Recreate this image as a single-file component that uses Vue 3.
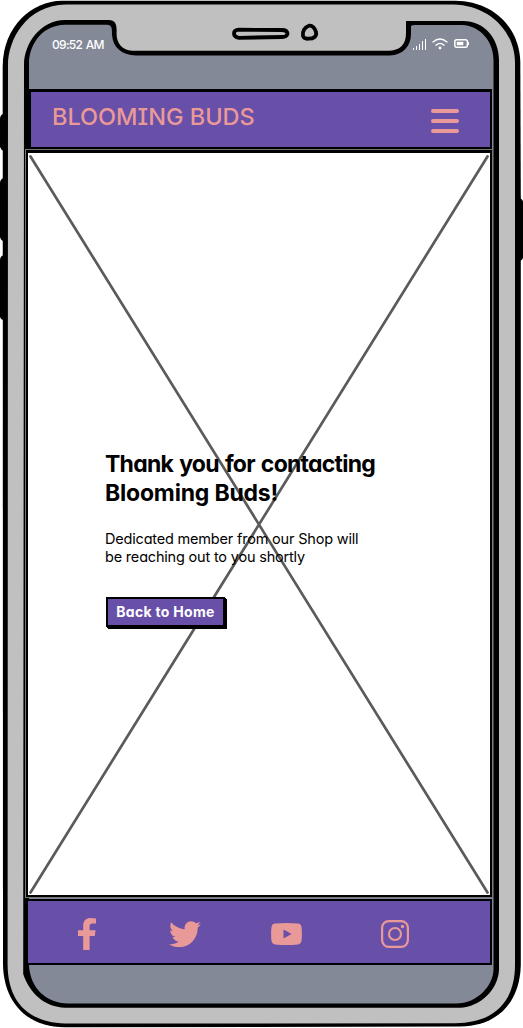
<script setup>
const barHeights = [2, 4, 6, 9, 11]
</script>

<template>
  <div class="phone">
    <svg class="frame" viewBox="0 0 523 1028" aria-hidden="true">
      <path d="M3 114Q0 115 0 119V147Q1 150 4 151ZM4 178Q0 179 0 183V237Q1 241 4 241ZM4 255Q0 256 0 260V317Q1 320 4 320ZM519 198Q523 199 523 202V258Q522 261 518 261Z" />
      <path d="M2.7 66C3 26 32 1 62 .7H455C494 1 519.5 28 520.3 62L520.8 200V965C520 1001 499 1026 460 1026.5L65 1027.3C26 1027 4 1002 3 965Z" />
      <path class="metal" d="M8 65C8 40 26 5 66 4.4H453C489 5 515 31 515 63V965C515 1001 495 1023 455 1023.2L65 1023.6C26 1022 8 1000 7.6 965Z" />
      <path d="M24 65C24 43 41 20 65 20H109C115 20 117 24 116.6 32C116 43 122 50 132 50.8H388C400 50.5 406 45 406 33V21H463C484 21 499 38 499 60V970C498 990 480 1007 460 1007.7H65C45 1007 30 994 23.2 974Z" />
      <path class="glass" d="M29 62C30 43 43 25 65 24.8H107C112 25 112 28 112 35C113 47 121 55 136 55.5H390C403 55 411 46 411 34V26Q412 25 415 25H462C481 26 493.5 42 493.5 60V970C493 985 478 1003.5 456 1003.5H68C46 1003 30 988 29 965Z" />
      <path class="ink" d="M239 29.7L282 30Q287 30 287.5 33.5Q287 37 282 37L239 37.8Q234 37 234 33.5Q234 30 239 29.7Z" />
      <path class="ink" d="M309 25.7C305 27 302 31 303 36Q304 39 308 38.7C314 39 317 36 316 32C315 28 312 25 309 25.7Z" />
    </svg>

    <div class="screen">
      <div class="status">
        <span class="time">09:52 AM</span>
        <div class="indicators">
          <div class="signal"><i v-for="(h, n) in barHeights" :key="n" :style="{ height: h + 'px' }"></i></div>
          <svg class="wifi" width="16" height="12" viewBox="0 0 16 12">
            <path d="M1 4Q8-2 15 4M4 7.2Q8 3.5 12 7.2" /><circle cx="8" cy="10" r="1.4" />
          </svg>
          <svg class="battery" width="15" height="9" viewBox="0 0 15 9">
            <rect class="shell" x=".8" y=".8" width="12.6" height="7.4" rx="2" />
            <rect x="2.800" y="2.800" width="6.500" height="3.400" /><rect x="13.500" y="3" width="1.500" height="3" />
          </svg>
        </div>
      </div>

      <header class="header">
        <h1>BLOOMING BUDS</h1>
        <div class="menu"><i></i><i></i><i></i></div>
      </header>

      <main class="main">
        <svg class="cross" viewBox="0 0 467 750" aria-hidden="true">
          <path d="M5.5 6.5L462.5 742.5M462.5 6.5L5.5 742.5" />
        </svg>
        <h2><span class="lead">Thank you for contacting</span><br>Blooming Buds!</h2>
        <p>Dedicated member from our Shop will<br>be reaching out to you shortly</p>
        <button>Back to Home</button>
      </main>

      <footer class="footer">
        <svg class="facebook" width="18" height="32" viewBox="0 0 18 32"><path d="M5.2 32V18H0V12.2H5.2V8C5.2 2.6 8.1 0 13 0Q16 0 18 .4V5.5H15C12 5.5 11.6 7 11.6 9V12.2H17.6L16.7 18H11.6V32Z" /></svg>
        <svg class="twitter" width="32" height="26" viewBox="0 0 512 416"><path d="M459 107c.3 4.500.3 9 .3 14C459 260 354 420 161 420 102 420 47 403 0 373c8 1 16 1.300 25 1.300 49 0 94-17 130-45-46-1-85-31-98-73 6 1 13 1.600 20 1.600 9 0 19-1.300 28-3.600C57 244 21 202 21 151v-1.300c14 8 30 13 47 13.600C40 144 21 111 21 75c0-20 5-38 14-54 52 64 130 105 217 110-2-8-3-16-3-24C249 49 296 2 354 2c30 0 57 13 76 33 24-5 47-13 67-25-8 25-25 45-46 58 21-2 42-8 61-16-15 21-33 40-53 55z" /></svg>
        <svg class="youtube" width="31" height="22" viewBox="0 0 31 22"><path fill-rule="evenodd" d="M4 .6Q15.500-.5 27 .6Q30 1 30.500 4Q31.300 11 30.500 18Q30 21 27 21.400Q15.500 22.500 4 21.400Q1 21 .5 18Q-.3 11 .5 4Q1 1 4 .6ZM12.500 6.500V15.500L20.500 11Z" /></svg>
        <svg class="insta" width="28" height="28" viewBox="0 0 28 28"><rect x="1.100" y="1.100" width="25.800" height="25.800" rx="6.800" /><circle cx="14" cy="14" r="6" /><circle class="dot" cx="21.500" cy="6.500" r="1.700" /></svg>
      </footer>
    </div>
  </div>
</template>

<style>
body { margin: 0; background: #fff; }
</style>

<style scoped>
* { box-sizing: border-box; }
.phone {
  position: relative;
  width: 523px;
  height: 1028px;
  overflow: hidden;
  font-family: Inter, "Liberation Sans", sans-serif;
  font-feature-settings: "cv11" 1, "cv08" 1;
}
.frame { position: absolute; inset: 0; width: 523px; height: 1028px; }
.metal { fill: #c0c0c0; }
.glass { fill: #838997; }
.ink { fill: none; stroke: #000; stroke-width: 3.8; }
.screen { position: relative; display: flex; flex-direction: column; width: 467px; margin-left: 25px; }
.status { height: 89px; padding: 36px 23px 0 27px; display: flex; justify-content: space-between; color: #fff; }
.time { font-size: 12px; line-height: 17px; font-weight: 500; letter-spacing: -.7px; word-spacing: 1px; }
.indicators { display: flex; gap: 6px; height: 15px; align-items: center; }
.signal { display: flex; align-items: flex-end; gap: 2px; height: 12px; margin-bottom: -1px; }
.signal i { width: 1px; background: #fff; }
.wifi { fill: #fff; }
.wifi path { fill: none; stroke: #fff; stroke-width: 1.3; stroke-linecap: round; }
.battery { fill: #fff; }
.battery .shell { fill: none; stroke: #fff; stroke-width: 1.5; }
.header {
  width: 464px;
  height: 60px;
  margin-left: 3px;
  padding: 0 31px 0 21px;
  display: flex;
  justify-content: space-between;
  align-items: center;
  border: solid #000;
  border-width: 3px 2px 2px 3px;
  background: #684fa8;
}
h1 { margin: 0 0 6px; font-size: 23.5px; line-height: 30px; font-weight: 500; letter-spacing: 0; color: #ea9999; white-space: nowrap; }
.menu { display: grid; gap: 6px; margin-top: 3px; }
.menu i { width: 28px; height: 4px; border-radius: 2px; background: #ea9999; }
.main {
  position: relative;
  width: 466px;
  height: 747px;
  margin: 1px 0 0 1px;
  padding: 297px 0 0 77px;
  background: #fff;
  border: 2px solid #000;
  border-top: 3px solid #000;
  outline: 1px solid #777;
}
.cross { position: absolute; left: -3px; top: -3px; width: 467px; height: 750px; }
.cross path { stroke: #5b5b5b; stroke-width: 2.7; stroke-linecap: round; }
h2, p, button { position: relative; white-space: nowrap; }
h2 { margin: 0; font-size: 23px; line-height: 29px; font-weight: 700; letter-spacing: -.2px; }
.lead { letter-spacing: -.75px; word-spacing: 1.4px; }
p { margin: 22px 0 0; font-size: 14.5px; line-height: 18px; font-weight: 400; letter-spacing: -.19px; }
button {
  display: block;
  width: 119px;
  height: 30px;
  margin: 31px 0 0 1px;
  padding: 0;
  border: 2px solid #000;
  background: #684fa8;
  color: #fff;
  font: 700 14px/24px Inter, "Liberation Sans", sans-serif;
  font-feature-settings: inherit;
  letter-spacing: .3px;
  box-shadow: 1px 1px 0 #000, 2px 2px 0 #000;
}
.footer {
  width: 466px;
  height: 66px;
  margin: 2px 0 0 1px;
  padding: 4px 0 0 50px;
  display: flex;
  align-items: center;
  border: 2px solid #000;
  background: #684fa8;
  fill: #ea9999;
}
.facebook { margin-right: 73px; }
.twitter { margin-right: 70px; }
.youtube { margin-right: 79px; }
.insta { fill: none; stroke: #ea9999; stroke-width: 2.2; }
.insta .dot { fill: #ea9999; stroke: none; }
</style>
